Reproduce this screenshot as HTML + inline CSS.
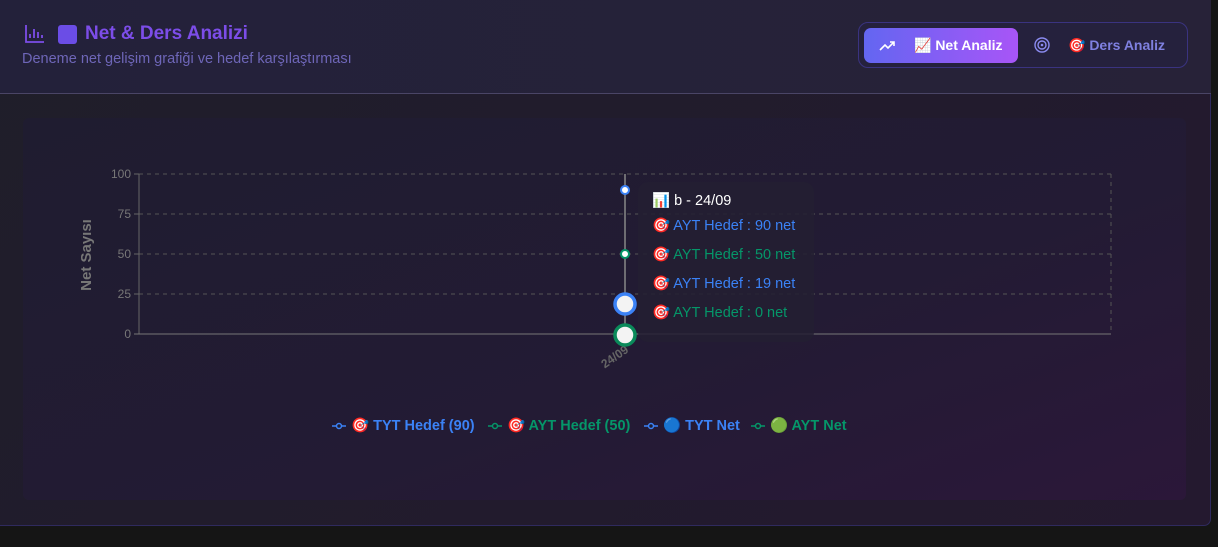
<!DOCTYPE html>
<html><head><meta charset="utf-8"><style>
body{margin:0;width:1218px;height:547px;background:#151515;font-family:"Liberation Sans","DejaVu Sans",sans-serif;overflow:hidden;position:relative}
.card{position:absolute;left:0;top:0;width:1210px;height:525px;border:1px solid #2f2a5e;border-top:none;border-left:none;border-radius:0 0 7px 0;background:linear-gradient(135deg,#1f1e2a,#24192f);}
.head{position:absolute;left:0;top:0;width:1211px;height:93px;border-bottom:1px solid #4a4566;background:linear-gradient(90deg,#23213a,#272238)}
.title{position:absolute;left:24px;top:23px;font-size:19px;font-weight:bold;color:#7c4de8;display:flex;align-items:center}
.sub{position:absolute;left:22px;top:51px;font-size:14.5px;color:#6e66b8}
.tabs{position:absolute;left:858px;top:22px;width:328px;height:44px;border:1px solid #3a3380;border-radius:10px;background:#25213d}
.act{position:absolute;left:5px;top:5px;width:154px;height:35px;border-radius:7px;background:linear-gradient(90deg,#6366f1,#a855f7);color:#fff;font-weight:bold;font-size:14px}
.panel{position:absolute;left:23px;top:118px;width:1163px;height:382px;border-radius:6px;background:linear-gradient(160deg,#1f1c30 0%,#231b34 60%,#2b1739 100%)}
.tip{position:absolute;left:638px;top:182px;width:176px;height:160px;border-radius:10px;background:rgba(35,30,50,0.85)}
.tip div{position:absolute;left:14px;font-size:14.5px;white-space:nowrap}
.leg{position:absolute;top:417px;font-size:14.5px;font-weight:bold;white-space:nowrap;display:flex;align-items:center}
.leg svg{margin-right:5px}
</style></head><body>
<div class="card"></div>
<div class="head">
<div class="title"><svg width="22" height="20" viewBox="0 0 22 20"><path d="M2 1V18H20M6 14V10M10 14V5M14 14V8M18 14V11" stroke="#7c4de8" stroke-width="1.8" fill="none"/></svg><span style="display:inline-block;width:19px;height:19px;background:#6b4de6;border-radius:3px;margin:0 8px 0 12px"></span>Net &amp; Ders Analizi</div>
<div class="sub">Deneme net gelişim grafiği ve hedef karşılaştırması</div>
<div class="tabs">
<div class="act"><svg style="position:absolute;left:15px;top:12px" width="16" height="12" viewBox="0 0 16 12"><path d="M1 10L6 5L9 8L15 2M11 2H15V6" stroke="#fff" stroke-width="1.6" fill="none"/></svg><span style="position:absolute;left:50px;top:9px">📈 Net Analiz</span></div>
<svg style="position:absolute;left:175px;top:14px" width="16" height="16" viewBox="0 0 16 16"><circle cx="8" cy="8" r="7" stroke="#8b8bf0" stroke-width="1.4" fill="none"/><circle cx="8" cy="8" r="4" stroke="#8b8bf0" stroke-width="1.4" fill="none"/><circle cx="8" cy="8" r="1.3" fill="#8b8bf0"/></svg>
<span style="position:absolute;left:209px;top:14px;font-size:14px;font-weight:bold;color:#7f80e0">🎯 Ders Analiz</span>
</div>
</div>
<div class="panel"></div>
<svg style="position:absolute;left:0;top:0" width="1218" height="547">
<g stroke="#555" stroke-dasharray="4,4" stroke-width="1"><line x1="139" y1="174" x2="1111" y2="174"/><line x1="139" y1="214" x2="1111" y2="214"/><line x1="139" y1="254" x2="1111" y2="254"/><line x1="139" y1="294" x2="1111" y2="294"/><line x1="1111" y1="174" x2="1111" y2="334"/></g>
<line x1="139" y1="174" x2="139" y2="334" stroke="#666"/><line x1="134" y1="334" x2="1111" y2="334" stroke="#777"/>
<g stroke="#666"><line x1="134" y1="174" x2="139" y2="174"/><line x1="134" y1="214" x2="139" y2="214"/><line x1="134" y1="254" x2="139" y2="254"/><line x1="134" y1="294" x2="139" y2="294"/></g>
<g fill="#777" font-size="12" text-anchor="end" font-family="Liberation Sans"><text x="131" y="178">100</text><text x="131" y="218">75</text><text x="131" y="258">50</text><text x="131" y="298">25</text><text x="131" y="338">0</text></g>
<text transform="translate(91,255) rotate(-90)" text-anchor="middle" fill="#777" font-size="15" font-weight="bold" font-family="Liberation Sans">Net Sayısı</text>
<text transform="translate(617,360) rotate(-35)" text-anchor="middle" fill="#666" font-size="12" font-weight="bold" font-family="Liberation Sans">24/09</text>
<line x1="625" y1="174" x2="625" y2="334" stroke="#888" stroke-width="1.5"/>
<circle cx="625" cy="190" r="4" fill="#fff" stroke="#3b82f6" stroke-width="2"/>
<circle cx="625" cy="254" r="4" fill="#fff" stroke="#059669" stroke-width="2"/>
<circle cx="625" cy="304" r="10" fill="#f3f3f3" stroke="#3b82f6" stroke-width="3.5"/>
<circle cx="625" cy="335" r="10" fill="#f3f3f3" stroke="#0a8a5a" stroke-width="3.5"/>
</svg>
<div class="tip">
<div style="top:10px;color:#fff">📊 b - 24/09</div>
<div style="top:35px;color:#3b82f6">🎯 AYT Hedef : 90 net</div>
<div style="top:64px;color:#059669">🎯 AYT Hedef : 50 net</div>
<div style="top:93px;color:#3b82f6">🎯 AYT Hedef : 19 net</div>
<div style="top:122px;color:#059669">🎯 AYT Hedef : 0 net</div>
</div>
<div class="leg" style="left:332px;color:#3b82f6"><svg width="14" height="8"><line x1="0" y1="4" x2="14" y2="4" stroke="#3b82f6" stroke-width="1.5"/><circle cx="7" cy="4" r="2.5" fill="#1f1c30" stroke="#3b82f6" stroke-width="1.5"/></svg>🎯 TYT Hedef (90)</div>
<div class="leg" style="left:488px;color:#059669"><svg width="14" height="8"><line x1="0" y1="4" x2="14" y2="4" stroke="#059669" stroke-width="1.5"/><circle cx="7" cy="4" r="2.5" fill="#1f1c30" stroke="#059669" stroke-width="1.5"/></svg>🎯 AYT Hedef (50)</div>
<div class="leg" style="left:644px;color:#3b82f6"><svg width="14" height="8"><line x1="0" y1="4" x2="14" y2="4" stroke="#3b82f6" stroke-width="1.5"/><circle cx="7" cy="4" r="2.5" fill="#1f1c30" stroke="#3b82f6" stroke-width="1.5"/></svg>🔵 TYT Net</div>
<div class="leg" style="left:751px;color:#059669"><svg width="14" height="8"><line x1="0" y1="4" x2="14" y2="4" stroke="#059669" stroke-width="1.5"/><circle cx="7" cy="4" r="2.5" fill="#1f1c30" stroke="#059669" stroke-width="1.5"/></svg>🟢 AYT Net</div>
</body></html>
